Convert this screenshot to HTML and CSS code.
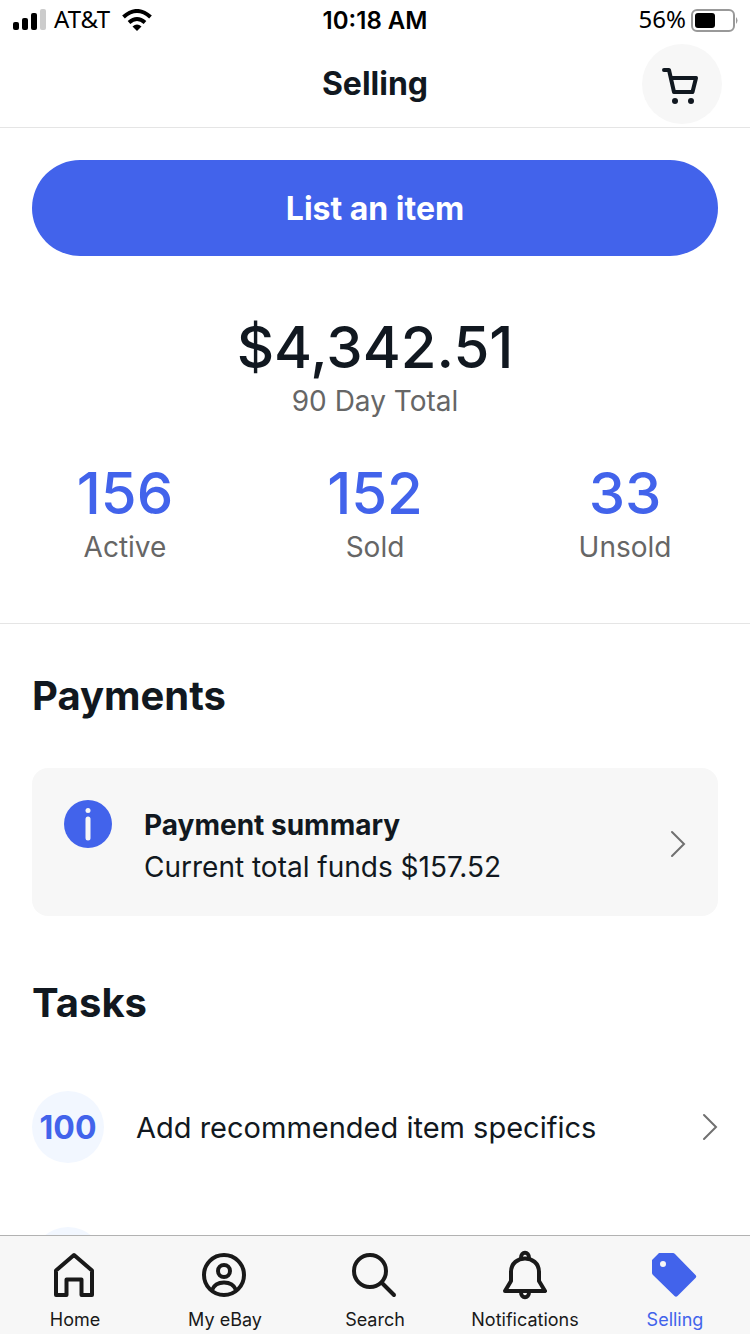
FILE: index.html
```
<!DOCTYPE html>
<html lang="en">
<head>
    <meta charset="UTF-8">
    <meta name="viewport" content="width=device-width, initial-scale=1.0">
    <title>Selling</title>
    <link rel="stylesheet" href="styles.css">
</head>
<body>
    <!-- Status bar -->
    <div class="status-bar">
        <div class="status-left">
            <svg width="34" height="22" viewBox="0 0 34 22" aria-hidden="true">
                <rect x="1" y="13" width="6" height="8" rx="2"/>
                <rect x="10" y="9" width="6" height="12" rx="2"/>
                <rect x="19" y="4" width="6" height="17" rx="2"/>
                <rect x="28" y="0" width="6" height="21" rx="2" fill="#ccc"/>
            </svg>
            <span>AT&amp;T</span>
            <svg class="wifi" width="30" height="22" viewBox="0 0 30 22" aria-hidden="true">
                <path d="M1.500 8Q15 -4 28.500 8M7 13.500Q15 6.500 23 13.500" fill="none" stroke="#000" stroke-width="4"/>
                <path d="M10.500 17.500Q15 13.500 19.500 17.500L15 22Z"/>
            </svg>
        </div>
        <span class="status-time">10:18 AM</span>
        <div class="status-right">
            <span>56%</span>
            <svg width="48" height="23" viewBox="0 0 48 23" aria-hidden="true">
                <rect x="2" y="1" width="42" height="21" rx="5" fill="none" stroke="#999" stroke-width="2"/>
                <rect x="5" y="4" width="20" height="15" rx="3"/>
                <path d="M46 8Q49 11.500 46 15Z" fill="#999"/>
            </svg>
        </div>
    </div>

    <header class="header">
        <h1>Selling</h1>
        <button class="cart-button" aria-label="Cart">
            <svg width="40" height="40" viewBox="0 0 40 40" fill="none" stroke="#111820" stroke-width="4" stroke-linejoin="round" stroke-linecap="round">
                <path d="M2 6H7L12 28H30.500L34 14H9"/>
                <circle cx="13" cy="37" r="3" fill="#111820" stroke="none"/>
                <circle cx="29" cy="37" r="3" fill="#111820" stroke="none"/>
            </svg>
        </button>
    </header>

    <main class="content">
        <section class="overview">
            <button class="list-button">List an item</button>
            <p class="total">$4,342.51</p>
            <p class="label">90 Day Total</p>
            <div class="stats">
                <a href="#active"><strong>156</strong><span class="label">Active</span></a>
                <a href="#sold"><strong>152</strong><span class="label">Sold</span></a>
                <a href="#unsold"><strong>33</strong><span class="label">Unsold</span></a>
            </div>
        </section>

        <section class="payments">
            <h2>Payments</h2>
            <a class="payment-card" href="#payments">
                <svg class="info" width="48" height="48" viewBox="0 0 48 48" aria-hidden="true">
                    <circle cx="24" cy="24" r="24" fill="#4263eb"/>
                    <circle cx="24" cy="10.500" r="2.500" fill="#f7f7f7"/>
                    <path d="M24 19V38" stroke="#f7f7f7" stroke-width="5" stroke-linecap="round"/>
                </svg>
                <span class="payment-text">
                    <strong>Payment summary</strong>
                    <span>Current total funds $157.52</span>
                </span>
                <svg class="chevron" width="16" height="28" viewBox="0 0 16 28" aria-hidden="true">
                    <path d="M2 2L14 14L2 26"/>
                </svg>
            </a>
        </section>

        <section class="tasks">
            <h2>Tasks</h2>
            <a class="task" href="#specifics">
                <span class="task-count">100</span>
                <span class="task-name">Add recommended item specifics</span>
                <svg class="chevron" width="16" height="28" viewBox="0 0 16 28" aria-hidden="true">
                    <path d="M2 2L14 14L2 26"/>
                </svg>
            </a>
            <div class="task">
                <span class="task-count"></span>
            </div>
        </section>
    </main>

    <!-- Bottom tabs -->
    <nav class="tab-bar">
        <a href="#home">
            <svg width="48" height="50" viewBox="0 0 48 50">
                <path d="M23 5L41 20.500V45H30.500V29.500H15.500V45H5V20.500Z"/>
            </svg>
            Home
        </a>
        <a href="#my-ebay">
            <svg width="48" height="50" viewBox="0 0 48 50">
                <circle cx="23" cy="25" r="20"/>
                <circle cx="23" cy="21" r="6"/>
                <path d="M11 40C15 30 31 30 35 40"/>
            </svg>
            My eBay
        </a>
        <a href="#search">
            <svg width="48" height="50" viewBox="0 0 48 50">
                <circle cx="19" cy="21" r="16"/>
                <path d="M31 33L43 45"/>
            </svg>
            Search
        </a>
        <a href="#notifications">
            <svg width="48" height="50" viewBox="0 0 48 50">
                <path d="M10 22C10 4 38 4 38 22V31L44 41H4L10 31Z"/>
                <path d="M20 8C20 1 28 1 28 8M20 42C20 49 28 49 28 42"/>
            </svg>
            Notifications
        </a>
        <a class="active" href="#selling">
            <svg width="48" height="50" viewBox="0 0 48 50">
                <path class="tag" fill-rule="evenodd" d="M8 3H22Q23 3 24 4L44.500 25Q46 26.500 44.500 28L26.500 46Q25 47.500 23.500 46L2 25Q1 24 1 23V10ZM12 11A3 3 0 1 0 12 17A3 3 0 1 0 12 11Z"/>
            </svg>
            Selling
        </a>
    </nav>
</body>
</html>
```
FILE: styles.css
```
* {
    box-sizing: border-box;
}

body {
    margin: 0;
    height: 100vh;
    display: flex;
    flex-direction: column;
    overflow: hidden;
    background: #fff;
    color: #111820;
    font-family: Inter, "Liberation Sans", sans-serif;
    font-size: 28px;
}

h1, h2, p {
    margin: 0;
}

a {
    color: inherit;
    text-decoration: none;
}

button {
    border: none;
    font-family: inherit;
    cursor: pointer;
}

svg {
    display: block;
    flex-shrink: 0;
}

/* Status bar */
.status-bar {
    display: grid;
    grid-template-columns: 1fr auto 1fr;
    align-items: center;
    height: 40px;
    padding: 0 12px;
    color: #000;
    font-size: 24px;
}

.status-left, .status-right {
    display: flex;
    align-items: center;
    gap: 8px;
}

.status-right {
    justify-content: flex-end;
    gap: 4px;
}

.status-left span, .status-right span {
    font-family: "Noto Sans", sans-serif;
    line-height: 30px;
    padding-bottom: 2px;
}

.wifi {
    margin-left: 4px;
}

.status-time {
    font-weight: 600;
}

/* Page header */
.header {
    display: grid;
    grid-template-columns: 1fr auto 1fr;
    align-items: center;
    height: 88px;
    padding: 0 28px;
    border-bottom: 1px solid #e5e5e5;
    flex-shrink: 0;
}

.header h1 {
    grid-column: 2;
    font-size: 32px;
    font-weight: 700;
}

.cart-button {
    display: flex;
    align-items: center;
    justify-content: center;
    justify-self: end;
    width: 80px;
    height: 80px;
    padding: 0;
    border-radius: 50%;
    background: #f7f7f7;
}

/* Scrolling content */
.content {
    flex: 1;
    min-height: 0;
    overflow: hidden;
}

.overview {
    padding: 32px 32px 57px;
    border-bottom: 1px solid #e5e5e5;
    text-align: center;
}

.list-button {
    width: 100%;
    height: 96px;
    border-radius: 48px;
    background: #4263eb;
    color: #fff;
    font-size: 32px;
    font-weight: 700;
}

.total {
    margin-top: 56px;
    font-size: 58px;
    font-weight: 500;
    line-height: 70px;
}

.label {
    color: #666;
    font-size: 28px;
    line-height: 38px;
}

.stats {
    display: grid;
    grid-template-columns: repeat(3, 1fr);
    margin: 38px -32px 0;
}

.stats a {
    display: flex;
    flex-direction: column;
}

.stats strong {
    color: #4263eb;
    font-size: 58px;
    font-weight: 500;
    line-height: 70px;
}

.payments, .tasks {
    padding: 48px 32px 0;
}

h2 {
    font-size: 40px;
    font-weight: 700;
    line-height: 48px;
}

.payment-card {
    display: flex;
    align-items: center;
    gap: 32px;
    margin-top: 48px;
    padding: 32px 32px 28px;
    border-radius: 16px;
    background: #f7f7f7;
}

.info {
    align-self: flex-start;
}

.payment-text {
    display: flex;
    flex: 1;
    flex-direction: column;
    padding-top: 4px;
    line-height: 42px;
}

.payment-text strong {
    font-weight: 700;
}

.chevron {
    fill: none;
    stroke: #707070;
    stroke-width: 2;
    stroke-linecap: round;
}

.tasks {
    padding-top: 63px;
}

.task {
    display: flex;
    align-items: center;
    gap: 32px;
    margin-top: 64px;
}

.task-count {
    display: flex;
    align-items: center;
    justify-content: center;
    width: 72px;
    height: 72px;
    border-radius: 50%;
    background: #f2f7ff;
    color: #4263eb;
    font-size: 32px;
    font-weight: 700;
}

.task-name {
    flex: 1;
    font-size: 29px;
}

/* Bottom tabs */
.tab-bar {
    display: grid;
    grid-template-columns: repeat(5, 1fr);
    flex-shrink: 0;
    padding: 14px 0 2px;
    border-top: 1px solid #b2b2b2;
    background: #f7f7f7;
    color: #191919;
    font-size: 18px;
    line-height: 24px;
}

.tab-bar a {
    display: flex;
    flex-direction: column;
    align-items: center;
    gap: 8px;
}

.tab-bar svg {
    fill: none;
    stroke: #191919;
    stroke-width: 4;
    stroke-linecap: round;
    stroke-linejoin: round;
}

.tab-bar .active {
    color: #4263eb;
}

.tab-bar .tag {
    fill: #4263eb;
    stroke: none;
}
```
